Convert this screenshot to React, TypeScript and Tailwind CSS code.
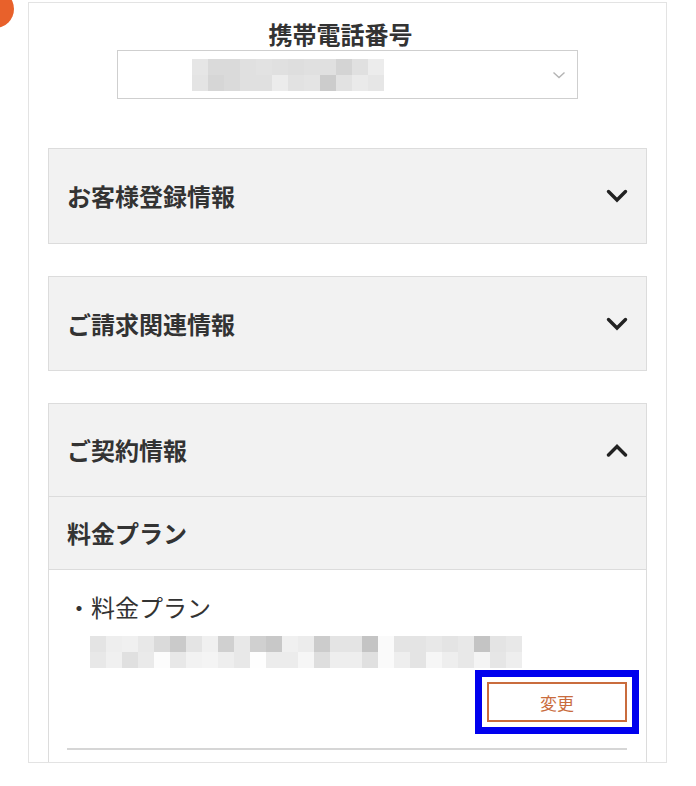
import React from "react";

const selectRows: string[][] = [
  ["#e6e6e6", "#dadada", "#dadada", "#e0e0e0", "#e2e2e2", "#e0e0e0", "#dedede", "#e0e0e0", "#e0e0e0", "#d4d4d4", "#e0e0e0", "#ececec"],
  ["#e4e4e4", "#d6d6d6", "#dadada", "#e0e0e0", "#e0e0e0", "#ececec", "#e2e2e2", "#e4e4e4", "#cccccc", "#e2e2e2", "#eaeaea", "#e6e6e6"],
];

const planRows: string[][] = [
  ["#e4e4e4", "#eeeeee", "#f0f0f0", "#e8e8e8", "#dadada", "#cacaca", "#e4e4e4", "#f0f0f0", "#d0d0d0", "#e8e8e8", "#d0d0d0", "#c8c8c8", "#f0f0f0", "#ececec", "#cccccc", "#e4e4e4", "#e4e4e4", "#c4c4c4", "#fafafa", "#e4e4e4", "#e4e4e4", "#e8e8e8", "#e4e4e4", "#e8e8e8", "#c4c4c4", "#e4e4e4", "#e8e8e8"],
  ["#e8e8e8", "#f0f0f0", "#e0e0e0", "#eaeaea", "#fcfcfc", "#e8e8e8", "#f2f2f2", "#f4f4f4", "#eeeeee", "#e8e8e8", "#fefefe", "#ececec", "#ececec", "#f6f6f6", "#dedede", "#eeeeee", "#eeeeee", "#e0e0e0", "#fafafa", "#eeeeee", "#e4e4e4", "#f6f6f6", "#eeeeee", "#e8e8e8", "#f4f4f4", "#e6e6e6", "#eeeeee"],
];

function Mosaic({ rows }: { rows: string[][] }) {
  return (
    <div className="flex flex-col blur-[0.6px]">
      {rows.map((row, i) => (
        <div key={i} className="flex">
          {row.map((c, j) => (
            <div key={j} className="w-[16px] h-[16px]" style={{ backgroundColor: c }} />
          ))}
        </div>
      ))}
    </div>
  );
}

function Chevron({ up = false }: { up?: boolean }) {
  return (
    <svg width="22" height="14" viewBox="0 0 22 14" className="shrink-0">
      <polyline
        points={up ? "2.5,12 11,3.5 19.5,12" : "2.5,2.5 11,11 19.5,2.5"}
        fill="none"
        stroke="#222"
        strokeWidth="3.4"
        strokeLinecap="round"
        strokeLinejoin="miter"
      />
    </svg>
  );
}

function AccordionHeader({ label, up = false, className = "" }: { label: string; up?: boolean; className?: string }) {
  return (
    <div className={`flex items-center justify-between bg-[#f2f2f2] pl-[18px] pr-[18px] ${className}`}>
      <span className="text-[24px] leading-[32px] font-bold text-[#333]">{label}</span>
      <Chevron up={up} />
    </div>
  );
}

export default function App() {
  return (
    <div className="relative w-[696px] h-[786px] bg-white overflow-hidden font-['Noto_Sans_CJK_JP','Noto_Sans',sans-serif] text-[#333]">
      <div className="absolute left-[-24px] top-[-10px] w-[38px] h-[38px] rounded-full bg-[#e8612b]" />
      <div className="ml-[28px] mt-[2px] w-[639px] h-[761px] border border-[#e3e3e3] overflow-hidden px-[19px] pt-[15px] flex flex-col">
        <h1 className="text-center text-[24px] leading-[32px] font-bold text-[#333] pr-[14px]">携帯電話番号</h1>
        <div className="mx-auto w-[461px] h-[49px] shrink-0 border border-[#cfcfcf] flex items-center pl-[74px] pr-[11px]">
          <Mosaic rows={selectRows} />
          <svg width="14" height="8" viewBox="0 0 14 8" className="ml-auto">
            <polyline points="1.5,1.5 7,6.5 12.5,1.5" fill="none" stroke="#b4b4b4" strokeWidth="1.4" />
          </svg>
        </div>

        <AccordionHeader label="お客様登録情報" className="mt-[49px] h-[96px] shrink-0 border border-[#dcdcdc]" />
        <AccordionHeader label="ご請求関連情報" className="mt-[32px] h-[95px] shrink-0 border border-[#dcdcdc]" />

        <div className="mt-[32px] flex-1 border-x border-t border-[#dcdcdc] flex flex-col">
          <AccordionHeader label="ご契約情報" up className="h-[93px] shrink-0 border-b border-[#dcdcdc]" />
          <div className="h-[73px] shrink-0 bg-[#f2f2f2] border-b border-[#dcdcdc] flex items-center pl-[18px]">
            <span className="text-[24px] leading-[32px] font-bold text-[#333]">料金プラン</span>
          </div>
          <div className="pl-[18px] pr-[19px] pt-[21px] flex flex-col">
            <span className="text-[24px] leading-[32px] text-[#333]">・料金プラン</span>
            <div className="mt-[13px] ml-[23px]">
              <Mosaic rows={planRows} />
            </div>
            <button className="mt-[14px] ml-auto w-[140px] h-[40px] border-2 border-[#c96c3d] bg-white text-[17px] leading-none text-[#c96c3d] outline-solid outline-[7px] outline-[#0000ee] outline-offset-[5px]">
              変更
            </button>
            <div className="mt-[26px] h-[2px] bg-[#d6d6d6]" />
          </div>
        </div>
      </div>
    </div>
  );
}
